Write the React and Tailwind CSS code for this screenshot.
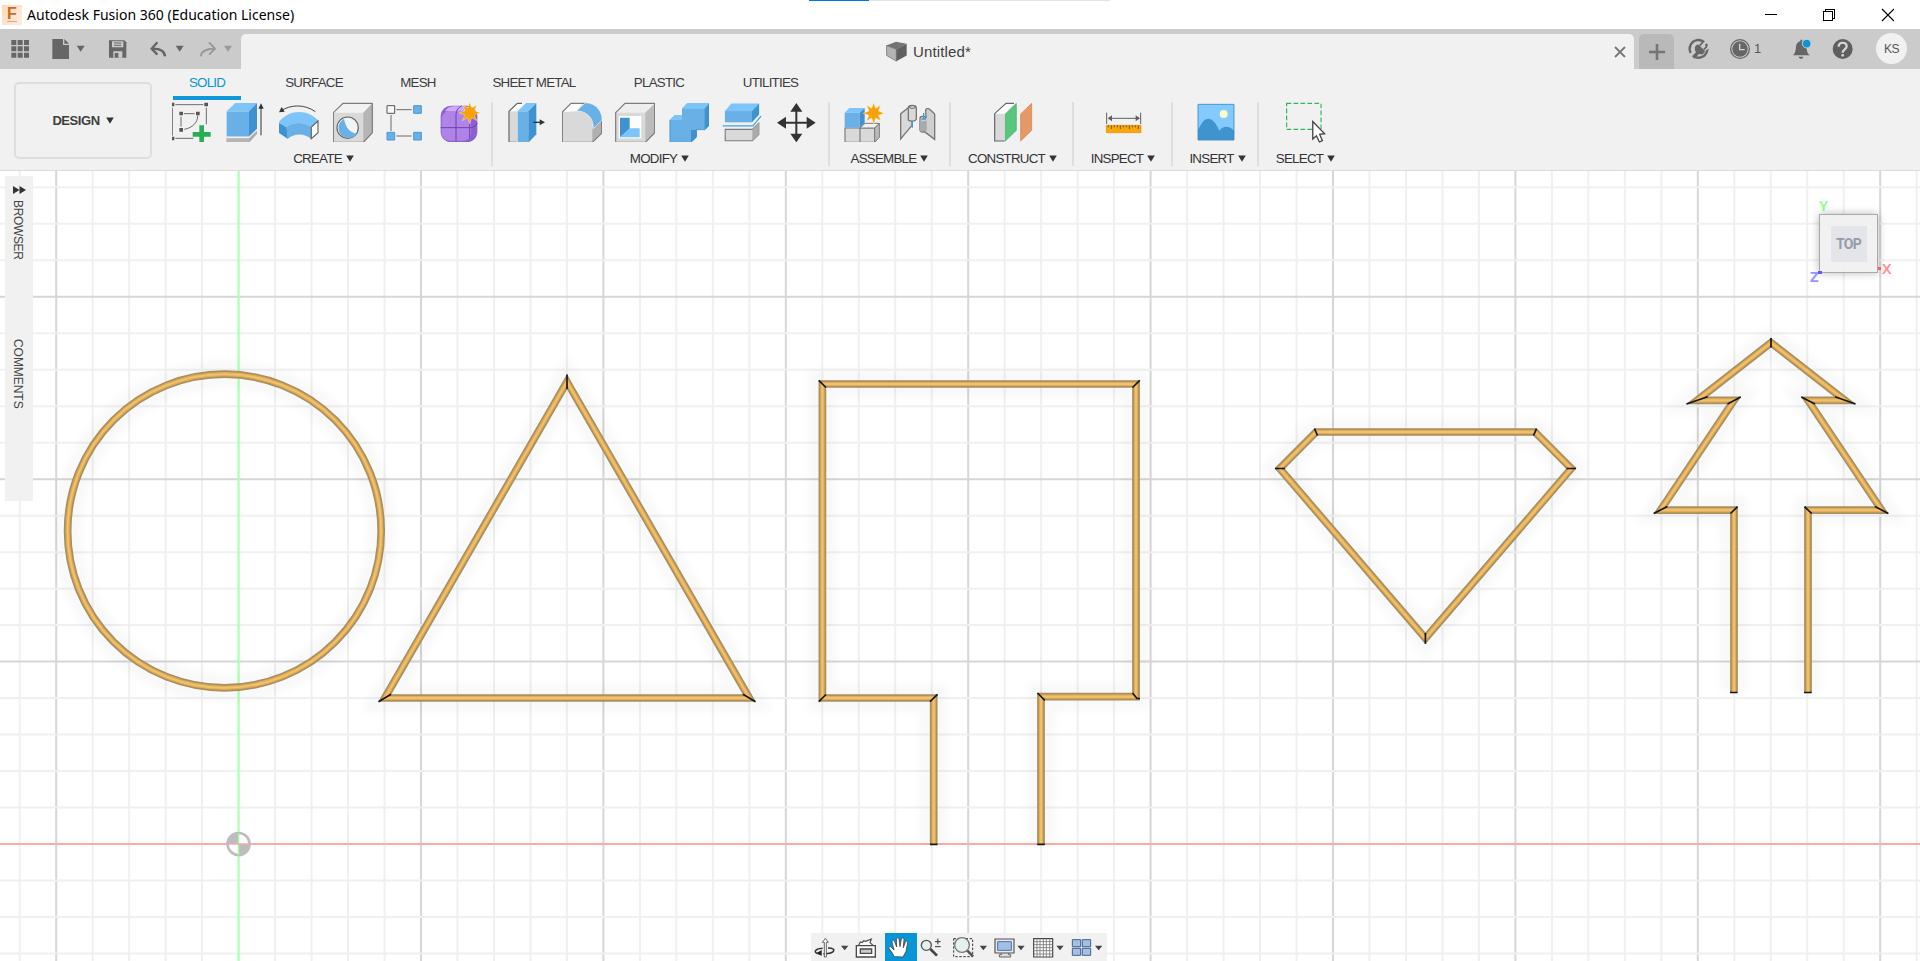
import React from "react";

const C = { edge: "#7b7b7b", face: "#d9d9d9", side: "#b5b5b5", blue: "#69b0e6", light: "#7cc4fa", deep: "#3f92cf" };

function Glyph({ box, children, className = "w-10 h-10" }) {
  return (
    <svg viewBox={box} className={`block shrink-0 ${className}`} fill="none">
      {children}
    </svg>
  );
}

function Caret({ className = "text-[#333333]" }) {
  return (
    <svg viewBox="0 0 8 7" className={`block h-[7px] w-2 shrink-0 ${className}`}>
      <path d="M0.2 0.5h7.600L4 6.800z" fill="currentColor" />
    </svg>
  );
}

const STAR = "m0-32 6 17 15-9-7 17 18 7-18 6 8 17-16-9-6 18-6-18-16 9 8-17-18-6 18-7-7-17 15 9z";

function CreateIcons() {
  return (
    <div className="flex gap-[13.5px] pl-5">
      <Glyph box="518 306 120 120">
        <g stroke="#6b6b6b" strokeWidth="3">
          <path d="M528 314h84M519 323v84M528 415h54M621 323v50M554 341h32M545 350v30M595 347c0 20-14 36-40 41" />
        </g>
        <path d="M514 308h11v11h-11zM615 308h11v11h-11zM514 410h11v11h-11zM540 335h11v11h-11zM590 335h11v11h-11zM540 384h11v11h-11z" fill="#555" />
        <path d="M600 376h14v20h20v14h-20v20h-14v-20h-20v-14h20z" fill="#27ae55" />
      </Glyph>
      <Glyph box="677 306 120 120">
        <path d="M679 410h67l24-22v14l-24 26h-67z" fill="#ababab" />
        <path d="M679 415h67v13h-67z" fill="#b5b5b5" />
        <path d="m679 410h67l24-22v4l-24 23h-67z" fill="#eee" />
        <path d="M679 334h67v75h-67z" fill={C.blue} />
        <path d="m679 334 26-25h65l-24 25z" fill={C.light} />
        <path d="m746 334 24-25v77l-24 23z" fill={C.deep} />
        <path d="M782 406v-84" stroke="#333" strokeWidth="3" />
        <path d="m782 310 8 16h-16z" fill="#333" />
      </Glyph>
      <Glyph box="838 306 120 120">
        <path d="M843 333c30-20 72-21 104 2" stroke="#444" strokeWidth="3" />
        <path d="m838 337 8-16 9 14z" fill="#333" />
        <path d="M836 368c32-42 88-42 121-5l-23 18c-20-16-52-16-73 1z" fill={C.light} />
        <path d="M836 368l25 14 4 35-27-18z" fill={C.deep} />
        <path d="M860 382c20-17 54-17 74-1v36c-18-18-52-18-70 0z" fill={C.blue} />
        <path d="m935 381 20-18v35l-20 18z" fill="#fff" stroke="#666" strokeWidth="3.5" />
      </Glyph>
      <Glyph box="998 306 120 120">
        <path d="m999 338 29-28h88v88l-27 29h-90z" fill={C.face} />
        <path d="m999 338 29-28h88l-27 28z" fill="#f2f2f2" />
        <path d="m1089 338 27-28v88l-27 29z" fill={C.side} />
        <path d="m999 338 29-28h88v88l-27 29h-90z" stroke={C.edge} strokeWidth="3.5" />
        <circle cx="1042" cy="383" r="32" fill="#f3f3f3" stroke="#666" strokeWidth="3.5" />
        <path d="M1031 357c6 27 18 42 39 44-12 17-37 15-48 3-12-14-10-37 9-47z" fill={C.blue} />
      </Glyph>
      <Glyph box="1157 306 120 120">
        <path d="M1188 329h46M1172 345v48M1188 408h46" stroke="#6b6b6b" strokeWidth="3" />
        <path d="M1160 317h23v23h-23z" fill="#f8f8f8" stroke="#555" strokeWidth="3" />
        <g fill="#69b0e6" stroke="#4a98d2" strokeWidth="3"><path d="M1240 317h23v23h-23zM1160 397h23v23h-23zM1240 397h23v23h-23z" /></g>
      </Glyph>
      <Glyph box="1319 306 120 120">
        <rect x="1321" y="317" width="110" height="110" rx="32" fill="#8d5fd0" />
        <rect x="1324" y="334" width="88" height="88" rx="22" fill="#b084e6" />
        <path d="M1334 334c8-14 16-15 44-15s28 3 32 15z" fill="#cda8f6" />
        <path d="M1321 383h89c10-1 18-6 21-14M1367 424v-80c0-14 8-22 17-26M1408 340v74" stroke="#6d40b0" strokeWidth="3" />
        <path d={STAR} transform="translate(1408 339)" fill="#f7a305" stroke="#fff" strokeWidth="1" />
      </Glyph>
    </div>
  );
}

function ModifyIcons() {
  return (
    <div className="flex gap-[13.5px] pl-[15px]">
      <Glyph box="54 306 120 120">
        <path d="m57 334 25-24h24l-24 24v93h-25z" fill={C.face} />
        <path d="m57 334 25-24h24l-24 24z" fill="#fff" />
        <path d="M80 427h-23v-93l25-24h14" stroke="#666" strokeWidth="3.5" />
        <path d="M83 334h32v94h-32z" fill={C.blue} />
        <path d="m83 334 25-25h30l-23 25z" fill={C.light} />
        <path d="m115 334 24-25v94l-24 25z" fill={C.deep} />
        <path d="M130 367h24" stroke="#333" strokeWidth="4" />
        <path d="m165 367-16-9v18z" fill="#333" />
      </Glyph>
      <Glyph box="214 306 120 120">
        <path d="m215 336 26-26h38c30 0 54 24 54 54v36l-28 27h-90z" fill={C.face} />
        <path d="m215 336 26-26h34l-17 24z" fill="#fff" />
        <path d="m305 386 28-26v40l-28 27z" fill="#b0b0b0" />
        <path d="m215 336 26-26h38c30 0 54 24 54 54v36l-28 27h-90z" stroke={C.edge} strokeWidth="3.5" />
        <path d="m258 333 26-25c33 2 50 24 50 52l-26 26c2-30-19-53-50-53z" fill={C.blue} stroke="#e8f3fb" strokeWidth="2" />
      </Glyph>
      <Glyph box="375 306 120 120">
        <path d="m377 338 28-28h90v88l-29 29h-89z" fill={C.face} />
        <path d="m377 338 28-28h90l-29 28z" fill="#eee" />
        <path d="m466 338 29-28v88l-29 29z" fill="#bcbcbc" />
        <path d="m377 338 28-28h89v88l-28 29h-89z" stroke={C.edge} strokeWidth="3.5" />
        <path d="M386 348h68v67h-68z" fill="#fff" />
        <path d="M390 353h29v34l-29 25z" fill={C.deep} />
        <path d="M390 412l29-27h30v27z" fill={C.light} />
      </Glyph>
      <Glyph box="535 306 120 120">
        <path d="m537 360 15-14h22v-20l16-17h67v66l-14 14h-25v22l-17 17h-64z" fill={C.blue} />
        <path d="m574 326 16-17h67l-15 17zM537 360l15-14h22v14z" fill={C.light} />
        <path d="m642 326 15-17v66l-15 15zM603 390h15v22l-17 16v-38z" fill={C.deep} />
        <path d="M538 360v67h63l16-17v-21h25l14-14v-65" stroke="#3e8dc8" strokeWidth="2" />
      </Glyph>
      <Glyph box="696 306 124 120">
        <path d="M705 332h84v35h-84z" fill={C.blue} />
        <path d="m705 332 20-23h86l-22 23z" fill={C.light} />
        <path d="m789 332 22-23v34l-22 24z" fill={C.deep} />
        <path d="M698 378h94l25-30" stroke="#44a2e2" strokeWidth="4" />
        <path d="M706 389h84l20-19v35l-20 19h-84z" fill={C.face} stroke={C.edge} strokeWidth="3.5" />
        <path d="m790 389 20-19v35l-20 19z" fill="#aaa" />
      </Glyph>
      <Glyph box="858 306 120 120">
        <path d="M919 325v86M877 368h84" stroke="#333" strokeWidth="6" />
        <path d="m919 309 18 26h-36zM919 427l18-26h-36zM861 368l27-18v36zM977 368l-27-18v36z" fill="#333" />
      </Glyph>
    </div>
  );
}

function AssembleIcons() {
  return (
    <div className="flex gap-[13.5px] pl-[14px]">
      <Glyph box="1060 306 120 120">
        <path d="M1063 384h45v43h-45zM1108 384h44v43h-44z" fill={C.face} stroke={C.edge} strokeWidth="3.5" />
        <path d="m1108 384 15-14h43l-14 14z" fill="#f2f2f2" stroke={C.edge} strokeWidth="3" />
        <path d="m1152 384 14-13v41l-14 15z" fill="#bbb" stroke={C.edge} strokeWidth="3" />
        <path d="M1062 338h45v45h-45z" fill={C.blue} />
        <path d="m1062 338 14-14h46l-15 14z" fill={C.light} />
        <path d="m1107 338 15-14v45l-15 14z" fill={C.deep} />
        <path d={STAR} transform="translate(1149 340)" fill="#f7a305" stroke="#fff" strokeWidth="1" />
      </Glyph>
      <Glyph box="1223 306 120 120">
        <path d="m1231 341 23-18h11v53l-34 41z" fill={C.face} stroke="#777" strokeWidth="4" />
        <path d="M1254 324c0-10 24-10 24 0v34c-3 7-18 7-24 2z" fill={C.face} stroke="#777" strokeWidth="4" />
        <ellipse cx="1266" cy="321" rx="9" ry="4" fill="#ddd" stroke="#666" strokeWidth="3" />
        <path d="M1266 363v20" stroke="#3b9adf" strokeWidth="4" />
        <path d="M1289 355c0-7 12-7 18-3l-1-22c0-4 8-6 12-2l15 14v76l-31-23c-5 3-13 0-13-5z" fill="#cfcfcf" stroke="#777" strokeWidth="4" />
        <path d="M1289 360c5 5 14 5 20 1v33h-20z" fill="#aaa" />
        <path d="M1300 339v19M1294 357h13" stroke="#3b9adf" strokeWidth="4" />
      </Glyph>
    </div>
  );
}

function ConstructIcon() {
  return (
    <div className="flex pl-[42px]">
      <Glyph box="218 306 120 120">
        <path d="m223 341 34-31h27l-31 31v82h-30z" fill={C.face} />
        <path d="m223 341 34-31h27l-31 31z" fill="#fff" />
        <path d="M253 423h-30v-82l34-31h24" stroke="#666" strokeWidth="3.5" />
        <path d="m255 342 33-32v81l-33 32z" fill="#5bc57f" stroke="#3fae67" strokeWidth="2" />
        <path d="m301 342 33-32v81l-33 32z" fill="#e69966" stroke="#cc7d49" strokeWidth="2" />
      </Glyph>
    </div>
  );
}

function InspectIcon() {
  return (
    <div className="flex pl-[29px]">
      <Glyph box="549 306 120 120">
        <path d="M560 338v34M662 338v34M570 355h84" stroke="#5f5f5f" strokeWidth="3" />
        <path d="m563 355 13-9v18zM660 355l-13-9v18z" fill="#5f5f5f" />
        <path d="M559 376h104v22h-104z" fill="#f9a60a" stroke="#e49300" strokeWidth="2" />
        <path d="M565 376v6M574 376v11M583 376v6M592 376v6M601 376v11M610 376v6M619 376v6M628 376v11M637 376v6M646 376v6M655 376v11" stroke="#6d5a32" strokeWidth="3" />
      </Glyph>
    </div>
  );
}

function InsertIcon() {
  return (
    <div className="flex pl-6">
      <Glyph box="830 306 120 120">
        <path d="M833 313h108v107h-108z" fill="#82caff" />
        <path d="M833 391c20-46 43-46 64 1 10-15 29-17 44 0v28h-108z" fill="#3f93cf" />
        <circle cx="910" cy="342" r="12" fill="#fcfcc8" />
        <path d="M833 313h108v107h-108z" stroke="#3989c0" strokeWidth="2.5" />
      </Glyph>
    </div>
  );
}

function SelectIcon() {
  return (
    <div className="flex pl-[26px]">
      <Glyph box="1095 306 124 124" className="h-[41px] w-[41px]">
        <path d="M1100 310h104v79h-104z" stroke="#32b35e" strokeWidth="3.5" strokeDasharray="14 7" />
        <path d="m1179 365 36 37-15 2 8 19-9 4-9-19-11 10z" fill="#fff" stroke="#444" strokeWidth="4" />
      </Glyph>
    </div>
  );
}

function Group({ label, width, children, pad = "", last }) {
  return (
    <div className={`relative flex h-[71px] flex-col ${width}`}>
      <div className="h-[50px] pt-px">{children}</div>
      <div className={`flex items-center justify-center gap-[4px] ${pad}`}>
        <span className="whitespace-nowrap text-[13.33px] leading-[16px] tracking-[-0.75px] text-[#333]">{label}</span>
        <Caret className="-mt-[2px] text-[#333333]" />
      </div>
      {!last && <div className="absolute right-0 top-px h-[64px] w-[2px] bg-[#dedede]" />}
    </div>
  );
}

function TitleBar() {
  return (
    <div className="relative flex h-[29px] items-center bg-white">
      <div className="absolute left-[809px] top-0 flex h-px w-[301px] bg-[#e3e3e3]">
        <div className="h-px w-[60px] bg-[#0078d7]" />
      </div>
      <div className="ml-[2px] flex h-5 w-5 items-center justify-center bg-gradient-to-br from-[#fbd9bc] to-[#fdeee2] pb-[2px]">
        <span className="border-b border-[#f3a568] text-[16px] font-bold leading-[15px] text-[#c86a1d]">F</span>
      </div>
      <span className="ml-[5px] whitespace-nowrap font-['Noto_Sans',sans-serif] text-[14px] leading-5 tracking-[0.02px] text-black">Autodesk Fusion 360 (Education License)</span>
      <svg viewBox="0 0 130 14" className="ml-auto mr-[26px] block h-[14px] w-[130px]" fill="none" stroke="#000" strokeWidth="1" shapeRendering="crispEdges">
        <path d="M1 6.500h12" />
        <path d="M59.500 3.500h9v9h-9zM61.500 3.500v-2h9v9h-2" />
        <path d="m118 1 12 12M130 1l-12 12" shapeRendering="auto" strokeWidth="1.2" />
      </svg>
    </div>
  );
}

function QuickBar() {
  return (
    <div className="flex h-10 bg-[#cbcbcb]">
      <div className="flex w-[241px]">
        <Glyph box="0 87 120 120">
          <path d="M34 120h15v15h-15zM53 120h15v15h-15zM72 120h15v15h-15zM34 139h15v15h-15zM53 139h15v15h-15zM72 139h15v15h-15zM34 158h15v15h-15zM53 158h15v15h-15zM72 158h15v15h-15z" fill="#666" />
        </Glyph>
        <Glyph box="120 87 180 120" className="h-10 w-[60px]">
          <path d="M157 117h32v18h18v42h-50zM193 117l14 14h-14z" fill="#666" />
          <path d="M230 137h24l-12 18z" fill="#666" />
        </Glyph>
        <Glyph box="300 87 120 120">
          <path d="M327 121h46l6 6v46h-52z" fill="#666" />
          <path d="M336 124h34v18h-34zM340 154h27v19h-27z" fill="#cbcbcb" />
          <path d="M342 129h22M342 136h22" stroke="#666" strokeWidth="3" />
          <path d="M344 159h11v14h-11z" fill="#666" />
        </Glyph>
        <Glyph box="420 87 150 120" className="h-10 w-[50px]">
          <path d="M458 146c22 0 36 7 37 23" stroke="#666" strokeWidth="7" />
          <path d="m472 127-17 19 17 18" stroke="#666" strokeWidth="7" />
          <path d="M527 137h24l-12 18z" fill="#666" />
        </Glyph>
        <Glyph box="570 87 153 120" className="h-10 w-[51px]">
          <path d="M643 146c-24 0-39 7-40 23" stroke="#999" strokeWidth="6" />
          <path d="m627 127 18 19-18 18" stroke="#999" strokeWidth="6" />
          <path d="M672 137h24l-12 18z" fill="#999" />
        </Glyph>
      </div>
      <div className="mt-[5px] flex h-[35px] w-[1393px] items-center rounded-t-[5px] bg-[#f1f1f1]">
        <div className="ml-[645px] flex items-center gap-[6px]">
          <Glyph box="1187 123 63 62" className="h-[21px] w-[21px]">
            <path d="m1188 136 30 11v36l-29-17z" fill="#b3b3b3" stroke="#666" strokeWidth="2" />
            <path d="m1188 136 29-11 32 6-31 16z" fill="#737373" />
            <path d="m1218 147 31-16v35l-31 17z" fill="#606060" />
          </Glyph>
          <span className="text-[15px] leading-5 tracking-[0.15px] text-[#404040]">Untitled*</span>
        </div>
        <svg viewBox="0 0 12 12" className="ml-auto mr-2 block h-3 w-3" stroke="#777" strokeWidth="1.8"><path d="m1 1 10 10M11 1 1 11" /></svg>
      </div>
      <div className="ml-[5px] mt-[5px] flex h-[35px] w-[35px] items-center justify-center rounded-t-[5px] bg-[#b9b9b9]">
        <svg viewBox="0 0 16 16" className="block h-4 w-4" stroke="#757575" strokeWidth="2.6"><path d="M8 0v16M0 8h16" /></svg>
      </div>
      <Glyph box="342 87 150 120" className="h-10 w-[50px]">
        <path d="M392 159a26.500 26.500 0 1 1 13 12" stroke="#666" strokeWidth="7" />
        <path d="m425 137 18-15M437 148l14-12" stroke="#cbcbcb" strokeWidth="8" />
        <path d="M405 142c1-5 6-9 11-8l19 19c-1 9-10 12-18 9l-14 14-7-7 12-12c-3-4-4-10-3-15z" fill="#666" />
        <path d="m419 137 10-11M431 149l10-10" stroke="#666" strokeWidth="5" />
      </Glyph>
      <div className="flex w-[58px] items-center">
        <Glyph box="492 87 90 120" className="h-10 w-[30px]">
          <circle cx="540" cy="147" r="28" stroke="#666" strokeWidth="4" />
          <circle cx="540" cy="147" r="23" fill="#666" />
          <path d="M539 131v18h15" stroke="#d4d4d4" strokeWidth="4" />
        </Glyph>
        <span className="text-[13px] leading-4 text-[#555]">1</span>
      </div>
      <Glyph box="666 87 126 120" className="h-10 w-[42px]">
        <path d="M699 166c9-8 8-19 9-27 1-9 7-14 13-15v-5h6v5c7 2 13 7 13 17 0 11 1 18 9 25zM716 170h14c-1 8-13 8-14 0z" fill="#666" />
        <circle cx="740" cy="131" r="13" fill="#0696d7" stroke="#cbcbcb" strokeWidth="3" />
      </Glyph>
      <Glyph box="792 87 120 120">
        <circle cx="848" cy="147" r="30" fill="#5f5f5f" />
        <path d="M836 140c0-16 25-15 24-1 0 9-12 9-12 19" stroke="#d8d8d8" strokeWidth="6.500" />
        <circle cx="848" cy="166" r="4" fill="#d8d8d8" />
      </Glyph>
      <div className="ml-[12px] mt-1 flex h-[31px] w-[31px] items-center justify-center rounded-full bg-[#f1f1f1]">
        <span className="text-xs tracking-[-0.5px] text-[#555]">KS</span>
      </div>
    </div>
  );
}

function Ribbon() {
  return (
    <div className="flex h-[102px] border-b border-[#dcdcdc] bg-[#f1f1f1]">
      <div className="ml-[14px] mt-[13px] flex h-[77px] w-[138px] items-center justify-center gap-[6px] rounded-[5px] border-2 border-[#dedede]">
        <span className="text-[13px] font-bold tracking-[-0.45px] text-[#3f3f3f]">DESIGN</span>
        <Caret />
      </div>
      <div className="flex flex-col">
        <div className="flex h-8 pl-[21px] text-center text-[13.33px] leading-[28px] tracking-[-0.75px] text-[#3c3c3c]">
          <div className="flex w-[68px] flex-col text-[#0696d7]"><span className="h-[27px]">SOLID</span><span className="h-[4px] bg-[#0f97d8]" /></div>
          <span className="w-[146px]">SURFACE</span>
          <span className="w-[62px]">MESH</span>
          <span className="w-[170px]">SHEET METAL</span>
          <span className="w-[80px]">PLASTIC</span>
          <span className="w-[143px]">UTILITIES</span>
        </div>
        <div className="flex h-[69px]">
          <Group label="CREATE" width="w-[341px]" pad="pl-[2px]"><CreateIcons /></Group>
          <Group label="MODIFY" width="w-[337px]" pad="pr-[4px]"><ModifyIcons /></Group>
          <Group label="ASSEMBLE" width="w-[121px]" pad="pr-[2px]"><AssembleIcons /></Group>
          <Group label="CONSTRUCT" width="w-[123px]"><ConstructIcon /></Group>
          <Group label="INSPECT" width="w-[99px]" pad="pr-px"><InspectIcon /></Group>
          <Group label="INSERT" width="w-[86px]" pad="pl-[3px]"><InsertIcon /></Group>
          <Group label="SELECT" width="w-[93px]" last><SelectIcon /></Group>
        </div>
      </div>
    </div>
  );
}

const TUBES = [
  "M567 381.800L749.300 698H384.800Z",
  "M933.700 844.500V698H822.400V384H1136V696.700H1041V844.500",
  "M1316 432H1535L1571.300 468.500L1425.400 638.300L1279.700 468.500Z",
  "M1734 692.500V510.200H1660.500L1734 400.400H1697L1771 342.700L1845 400.400H1808L1881.700 510.200H1808V692.500",
];

const JOINTS =
  "M567 374.500V389M378.500 701.700L391 694.300M755.500 701.700L743 694.300" +
  "M818.800 380.300L826 387.500M1139.800 380.300L1132.500 387.500M818.800 701.700L826 694.500M937.500 694.300L930 701.700M1037.500 693L1044.800 700.300M1132.500 693L1137 698.500H1140M930 844.300H937.500M1037.300 844.300H1044.800" +
  "M1314.500 428.700L1317.500 435.500M1536.500 428.700L1533.500 435.500M1275 468.500H1285M1566.500 468.500H1576M1425.400 633V643.800" +
  "M1771 338V347.500M1686.500 404L1707.700 396.800M1740.700 397L1727.500 404M1855.500 404L1835 396.800M1801.300 397L1815 404M1653.700 513.500L1667.300 506.500M1737.500 506.700L1730.500 513.500M1888.300 513.500L1875 506.500M1804.500 506.700L1811.700 513.500M1730 692.500H1737.500M1804 692.500H1811.700";

function Canvas() {
  const x0 = 238.6, y0 = 844, step = 36.48;
  const cols = [], rows = [];
  for (let i = -6; i <= 46; i++) if (i !== 0) cols.push(i);
  for (let j = -3; j <= 18; j++) if (j !== 0) rows.push(j);
  const tone = (n) => (n % 5 === 0 ? "#d6d6d6" : "#f0f0f0");
  const order = (a, b) => (a % 5 === 0) - (b % 5 === 0);
  const tube = (color, width) => (
    <g stroke={color} strokeWidth={width} strokeMiterlimit="10">
      <circle cx="224.400" cy="531" r="156.800" />
      {TUBES.map((d) => <path key={d} d={d} />)}
    </g>
  );
  return (
    <svg viewBox="0 171 1920 790" className="block h-[790px] w-[1920px]" fill="none">
      <defs>
        <filter id="soft" x="-5%" y="-5%" width="110%" height="110%"><feGaussianBlur stdDeviation="4" /></filter>
      </defs>
      {cols.sort(order).map((i) => <path key={`c${i}`} d={`M${x0 + i * step} 171V961`} stroke={tone(i)} strokeWidth="2" />)}
      {rows.sort(order).map((j) => <path key={`r${j}`} d={`M0 ${y0 - j * step}H1920`} stroke={tone(j)} strokeWidth="2" />)}
      <path d="M0 844H1920" stroke="#ffa9a9" strokeWidth="2" />
      <path d="M238.600 171V961" stroke="#b0ffb0" strokeWidth="2.200" />
      <circle cx="238.600" cy="844" r="11" fill="#fff" stroke="#bdbdbd" strokeWidth="2.600" />
      <path d="M238.600 844V832a12 12 0 0 0-12 12zM238.600 844v12a12 12 0 0 0 12-12z" fill="#bdbdbd" />
      <path d="M238.600 833v22" stroke="#a3f5a3" strokeWidth="1.500" />
      <path d="M229 844h20" stroke="#f5abab" strokeWidth="1.500" />
      <g filter="url(#soft)" opacity="0.025">{tube("#000", 28)}</g>
      {tube("#9b9075", 7.7)}
      {tube("#b78f4b", 6.2)}
      {tube("#e0ae5a", 4.2)}
      {tube("#f0c26f", 1.8)}
      <path d={JOINTS} stroke="#161616" strokeWidth="1.700" />
    </svg>
  );
}

function SidePanel() {
  return (
    <div className="absolute left-[5px] top-[5px] flex h-[325px] w-7 flex-col items-center bg-[#f1f1f1] text-xs text-[#444]">
      <svg viewBox="0 0 13 8" className="mt-[10px] block h-2 w-[13px]"><path d="M0 0v8l6.500-4zM6.500 0v8l6.500-4z" fill="#333" /></svg>
      <span className="mr-[2px] mt-[6px] h-[62px] leading-7 tracking-[-0.35px] [writing-mode:vertical-rl]">BROWSER</span>
      <span className="mr-[2px] mt-[77px] h-[74px] leading-7 tracking-[-0.05px] [writing-mode:vertical-rl]">COMMENTS</span>
    </div>
  );
}

function ViewCube() {
  return (
    <div className="absolute left-[1810px] top-[24px] h-[90px] w-[90px] font-['Noto_Sans',sans-serif] text-[15px] font-semibold leading-[14px]">
      <span className="absolute left-[9px] top-[3px] text-[#8dff8d]">Y</span>
      <div className="absolute left-[9px] top-[19px] flex h-[59px] w-[59px] items-center justify-center border border-[#a9a9a9] bg-[#efefef]/90 shadow-[0_0_8px_rgba(0,0,0,0.28)]">
        <div className="flex h-9 w-9 items-center justify-center bg-[#e3e5ea]">
          <span className="font-['Roboto',sans-serif] text-[14px] font-bold tracking-[-0.7px] text-[#979ca4]">TOP</span>
        </div>
      </div>
      <span className="absolute left-[68px] top-[72px] h-[3px] w-[3px] bg-[#ff5c5c]" />
      <span className="absolute left-[72px] top-[66px] text-[#ff9090]">X</span>
      <span className="absolute left-0 top-[74px] font-bold text-[#9797ff]">Z</span>
      <span className="absolute left-[8px] top-[76px] h-[3px] w-[4px] bg-[#5d5dff]" />
    </div>
  );
}

function NavBar() {
  const line = "#4b4b4b";
  return (
    <div className="absolute bottom-0 left-[811px] flex h-7 w-[296px] bg-[#f1f1f1]">
      <Glyph box="33 39 120 84" className="h-7 w-10">
        <path d="M68 85c-26 2-30 15-8 16M70 101c36 1 42-18 14-17" stroke="#333" strokeWidth="4.500" />
        <path d="m50 99 15-9v18z" fill="#222" />
        <path d="m76 55 9 12h-6v44h-6v-44h-6z" fill="#fff" stroke={line} strokeWidth="2.500" />
        <path d="M123 77h22l-11 14z" fill="#444" />
      </Glyph>
      <Glyph box="153 39 102 84" className="h-7 w-[34px]">
        <path d="m176 76 5-10 6 2 4-6 6 2 17-7-4 11 9 8" fill="#fff" stroke={line} strokeWidth="3.500" />
        <path d="M169 77h57v34h-57z" fill="#fff" stroke={line} strokeWidth="4" />
        <path d="M181 87h34v13h-34z" fill="#c9ccd4" stroke={line} strokeWidth="4" />
      </Glyph>
      <div className="bg-[#0696d7]">
        <Glyph box="255 39 96 84" className="h-7 w-8">
          <path d="m283 110-6-11-10-14c-1-6 5-7 9-1l6 6-6-24c0-6 6-7 8-1l6 16-1-24c1-5 7-5 8 0l3 23 4-23c2-5 8-4 8 1l-2 25 6-17c3-5 8-3 7 2l-5 26-9 17z" fill="#fff" stroke="#444" strokeWidth="2.500" strokeLinejoin="round" />
        </Glyph>
      </div>
      <Glyph box="351 39 90 84" className="h-7 w-[30px]">
        <path d="m391 87 20 20" stroke="#444" strokeWidth="8" />
        <circle cx="379" cy="76" r="15" fill="#e5f0f2" stroke="#555" strokeWidth="4" />
        <path d="M405 65h17M413.500 56v17M405 80h17" stroke="#333" strokeWidth="3" />
      </Glyph>
      <Glyph box="441 39 129 84" className="h-7 w-[43px]">
        <path d="M461 56h57v54h-57z" stroke="#333" strokeWidth="3" strokeDasharray="7 5" />
        <path d="m499 89 20 20" stroke="#555" strokeWidth="8" />
        <circle cx="486" cy="75" r="22" fill="#e5f0f1" stroke="#777" strokeWidth="4" />
        <path d="M539 77h22l-11 14z" fill="#444" />
      </Glyph>
      <Glyph box="570 39 117 84" className="h-7 w-[39px]">
        <path d="M604 96v8h-6v7h34v-7h-6v-8" fill="#ddd" stroke="#666" strokeWidth="3" />
        <path d="M585 57h57v42h-57z" fill="#e7e7e7" stroke="#555" strokeWidth="3.500" />
        <path d="M593 65h41v26h-41z" fill="#a2bee8" stroke="#4c70a9" strokeWidth="3" />
        <path d="M652 77h22l-11 14z" fill="#444" />
      </Glyph>
      <Glyph box="687 39 117 84" className="h-7 w-[39px]">
        <path d="M701 56h57v55h-57z" fill="#fff" stroke="#444" strokeWidth="3.500" />
        <path d="M711 56v55M720 56v55M730 56v55M739 56v55M749 56v55M701 65h57M701 74h57M701 83h57M701 92h57M701 102h57" stroke="#777" strokeWidth="2.500" />
        <path d="M769 77h22l-11 14z" fill="#444" />
      </Glyph>
      <Glyph box="804 39 117 84" className="h-7 w-[39px]">
        <path d="M816 58h57v48h-57z" fill="#dce6f6" />
        <path d="M817 59h25v21h-25zM847 59h25v21h-25zM817 85h25v21h-25zM847 85h25v21h-25z" fill="#a6bfe3" stroke="#46618d" strokeWidth="3" />
        <path d="M885 77h22l-11 14z" fill="#444" />
      </Glyph>
    </div>
  );
}

export default function App() {
  return (
    <div className="flex h-[961px] w-[1920px] flex-col overflow-hidden bg-white font-['Liberation_Sans',Arial,sans-serif]">
      <TitleBar />
      <QuickBar />
      <Ribbon />
      <div className="relative h-[790px]">
        <Canvas />
        <SidePanel />
        <ViewCube />
        <NavBar />
      </div>
    </div>
  );
}
